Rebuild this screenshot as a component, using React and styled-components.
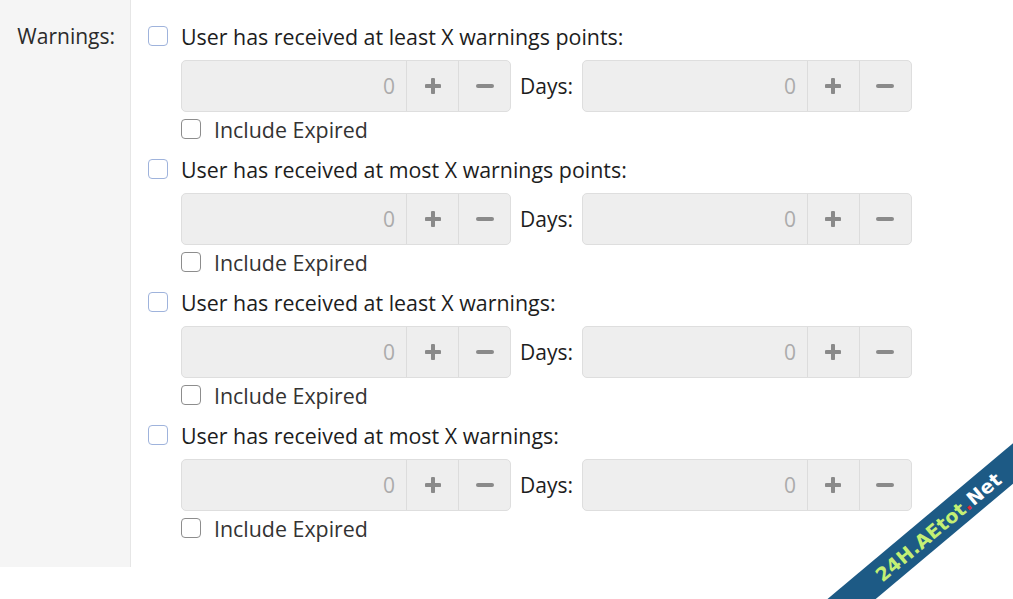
import React from 'react';
import styled, { createGlobalStyle } from 'styled-components';

const GlobalStyle = createGlobalStyle`
  html, body {
    margin: 0;
    padding: 0;
    background: #fff;
    overflow: hidden;
  }
  body {
    font-family: 'Open Sans', 'Noto Sans', sans-serif;
    color: #1d1d1d;
  }
`;

const Page = styled.div`
  position: relative;
  width: 1013px;
  height: 599px;
  overflow: hidden;
`;

const FormRow = styled.div`
  display: flex;
  align-items: stretch;
`;

const LabelCol = styled.div`
  width: 131px;
  flex: none;
  box-sizing: border-box;
  background: #f5f5f5;
  border-right: 1px solid #e6e6e6;
  padding: 22px 15px 0 0;
  text-align: right;
  font-size: 21px;
  line-height: 28px;
  color: #2b2b2b;
`;

const FieldCol = styled.div`
  flex: 1;
  padding: 24px 0 27px 17px;
`;

const Option = styled.div`
  & + & {
    margin-top: 16px;
  }
`;

const CheckRow = styled.label`
  display: flex;
  align-items: center;
  gap: 13px;
  height: 24px;
  font-size: 21.4px;
  color: ${(p) => (p.$muted ? '#333' : '#1d1d1d')};
  margin-left: ${(p) => (p.$indent ? '33px' : '0')};
  margin-top: ${(p) => (p.$indent ? '5px' : '0')};
`;

const Box = styled.span`
  width: 20px;
  height: 20px;
  box-sizing: border-box;
  border: 1.5px solid ${(p) => (p.$primary ? '#9fb3dc' : '#8d8d8d')};
  border-radius: 4px;
  background: #fff;
  flex: none;
`;

const InputRow = styled.div`
  display: flex;
  align-items: center;
  gap: 9px;
  margin: 12px 0 0 33px;
`;

const Spin = styled.div`
  display: flex;
  width: 330px;
  height: 52px;
  box-sizing: border-box;
  background: #eeeeee;
  border: 1px solid #dedede;
  border-radius: 5px;
  overflow: hidden;
`;

const Value = styled.div`
  flex: 1;
  display: flex;
  align-items: center;
  justify-content: flex-end;
  padding-right: 11px;
  font-size: 21px;
  color: #ababab;
`;

const SpinButton = styled.div`
  width: 51px;
  flex: none;
  display: flex;
  align-items: center;
  justify-content: center;
  border-left: 1px solid #dcdcdc;
`;

const DaysLabel = styled.span`
  font-size: 21px;
  color: #1d1d1d;
`;

const Ribbon = styled.div`
  position: absolute;
  left: 758px;
  top: 511px;
  width: 360px;
  height: 31px;
  background: #1d5a85;
  transform: rotate(-40deg);
  display: flex;
  align-items: center;
  justify-content: center;
  font-family: 'DejaVu Sans', sans-serif;
  font-weight: bold;
  font-size: 19px;
  letter-spacing: 0.3px;
  color: #c4ef74;
  span.dot {
    color: #e02a3a;
  }
  span.net {
    color: #fff;
  }
`;

const Plus = () => (
  <svg width="16" height="16" viewBox="0 0 16 16">
    <path d="M8 1.5v13M1.5 8h13" stroke="#8a8a8a" strokeWidth="4" strokeLinecap="round" />
  </svg>
);

const Minus = () => (
  <svg width="18" height="16" viewBox="0 0 18 16">
    <path d="M2 8h14" stroke="#8a8a8a" strokeWidth="4" strokeLinecap="round" />
  </svg>
);

const SpinBox = () => (
  <Spin>
    <Value>0</Value>
    <SpinButton>
      <Plus />
    </SpinButton>
    <SpinButton>
      <Minus />
    </SpinButton>
  </Spin>
);

const options = [
  'User has received at least X warnings points:',
  'User has received at most X warnings points:',
  'User has received at least X warnings:',
  'User has received at most X warnings:',
];

const App = () => (
  <Page>
    <GlobalStyle />
    <FormRow>
      <LabelCol>Warnings:</LabelCol>
      <FieldCol>
        {options.map((text) => (
          <Option key={text}>
            <CheckRow>
              <Box $primary />
              {text}
            </CheckRow>
            <InputRow>
              <SpinBox />
              <DaysLabel>Days:</DaysLabel>
              <SpinBox />
            </InputRow>
            <CheckRow $indent $muted>
              <Box />
              Include Expired
            </CheckRow>
          </Option>
        ))}
      </FieldCol>
    </FormRow>
    <Ribbon>
      24H.AEtot<span className="dot">.</span>
      <span className="net">Net</span>
    </Ribbon>
  </Page>
);

export default App;
